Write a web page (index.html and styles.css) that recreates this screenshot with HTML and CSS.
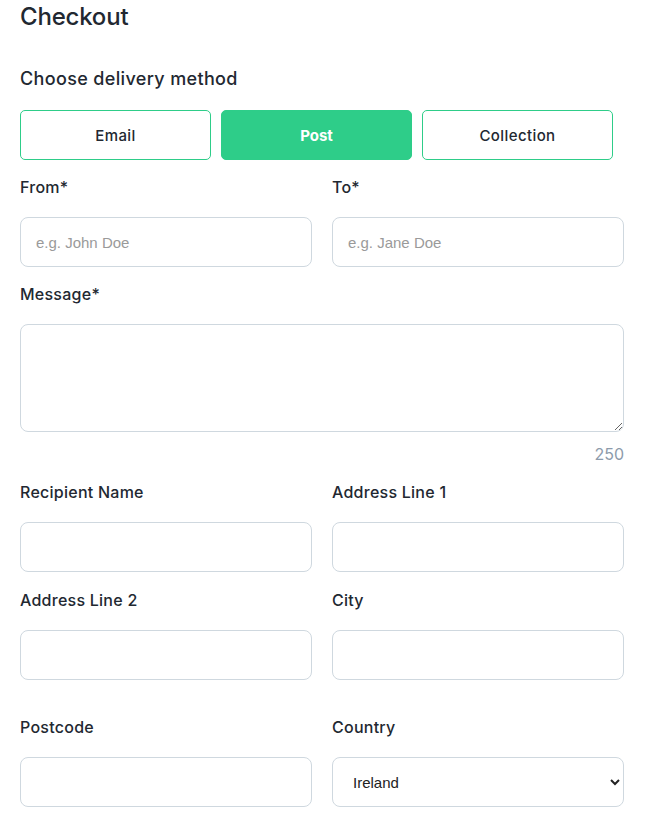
FILE: index.html
```html
<!DOCTYPE html>
<html lang="en">
<head>
    <meta charset="UTF-8">
    <meta name="viewport" content="width=device-width, initial-scale=1.0">
    <title>Checkout</title>
    <link rel="stylesheet" href="styles.css">
</head>
<body>
    <div class="checkout">
        <h1>Checkout</h1>
        <h2>Choose delivery method</h2>

        <div class="methods">
            <button class="method">Email</button>
            <button class="method active">Post</button>
            <button class="method">Collection</button>
        </div>

        <div class="row">
            <div class="field">
                <label>From*</label>
                <input type="text" placeholder="e.g. John Doe">
            </div>
            <div class="field">
                <label>To*</label>
                <input type="text" placeholder="e.g. Jane Doe">
            </div>
        </div>

        <div class="row single">
            <div class="field">
                <label>Message*</label>
                <textarea></textarea>
                <div class="counter">250</div>
            </div>
        </div>

        <div class="row loose">
            <div class="field">
                <label>Recipient Name</label>
                <input type="text">
            </div>
            <div class="field">
                <label>Address Line 1</label>
                <input type="text">
            </div>
        </div>

        <div class="row loose">
            <div class="field">
                <label>Address Line 2</label>
                <input type="text">
            </div>
            <div class="field">
                <label>City</label>
                <input type="text">
            </div>
        </div>

        <div class="row spaced">
            <div class="field">
                <label>Postcode</label>
                <input type="text">
            </div>
            <div class="field">
                <label>Country</label>
                <select>
                    <option>Ireland</option>
                    <option>United Kingdom</option>
                </select>
            </div>
        </div>
    </div>
</body>
</html>
```

FILE: styles.css
```css
body {
    font-family: "Inter", "Noto Sans", sans-serif;
    color: #222831;
    background: white;
    margin: 0;
}
.checkout {
    width: 604px;
    padding: 0 20px;
}
h1 {
    font-size: 24px;
    font-weight: 500;
    line-height: 30px;
    letter-spacing: -0.2px;
    margin: 2px 0 0;
}
h2 {
    font-size: 18px;
    font-weight: 500;
    line-height: 24px;
    letter-spacing: 0.35px;
    margin: 35px 0 0;
}
.methods {
    display: grid;
    grid-template-columns: repeat(3, 191px);
    gap: 10px;
    margin-top: 19px;
}
.method {
    height: 50px;
    font-family: inherit;
    font-size: 15px;
    font-weight: 500;
    letter-spacing: 0.4px;
    color: #222831;
    background: white;
    border: 1px solid #2ecd89;
    border-radius: 5px;
    cursor: pointer;
}
.method.active {
    background: #2ecd89;
    color: white;
    font-weight: 700;
    letter-spacing: 0;
}
.row {
    display: grid;
    grid-template-columns: 1fr 1fr;
    gap: 20px;
    margin-top: 17px;
}
.row.single {
    grid-template-columns: 1fr;
}
.row.loose {
    margin-top: 18px;
}
.row.spaced {
    margin-top: 37px;
}
label {
    display: block;
    font-size: 16px;
    font-weight: 500;
    line-height: 20px;
    letter-spacing: 0.25px;
    margin-bottom: 20px;
}
input[type="text"], select, textarea {
    display: block;
    width: 100%;
    box-sizing: border-box;
    height: 50px;
    padding: 0 15px;
    border: 1px solid #cfd8df;
    border-radius: 8px;
    background: white;
    font-family: "Liberation Sans", Arial, sans-serif;
    font-size: 15px;
    color: #222;
}
input::placeholder {
    color: #9a9a9a;
}
textarea {
    height: 108px;
    padding: 10px 15px;
    resize: vertical;
}
select {
    padding: 0 10px 0 16px;
    font-size: 15px;
}
.counter {
    text-align: right;
    margin-top: 12px;
    font-size: 16px;
    line-height: 20px;
    color: #8d9bab;
}
```
